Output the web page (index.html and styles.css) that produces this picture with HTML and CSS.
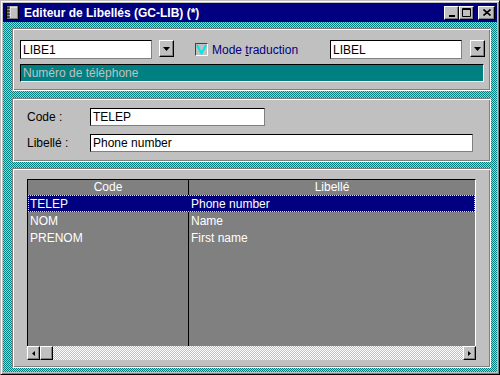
FILE: index.html
```html
<!DOCTYPE html>
<html lang="fr">
<head>
  <meta charset="UTF-8">
  <title>Editeur de Libellés (GC-LIB) (*)</title>
  <link rel="stylesheet" href="styles.css">
</head>
<body>

  <div class="window">
    <div class="titlebar">
      <svg class="app-icon" width="13" height="15" viewBox="0 0 13 15">
        <rect x="0.5" y="0.5" width="12" height="14" fill="#808080" stroke="#000"/>
        <rect x="4" y="2" width="7" height="11" fill="#c0c0c0"/>
        <path d="M4 2h7M4 2v11" stroke="#fff"/>
        <path d="M1 3h3M1 6h3M1 9h3M1 12h3" stroke="#000"/>
      </svg>
      <span class="title">Editeur de Libellés (GC-LIB) (*)</span>
      <div class="controls">
        <span class="ctl"><svg width="8" height="8" viewBox="0 0 8 8"><rect x="1" y="6" width="6" height="2" fill="#000"/></svg></span>
        <span class="ctl"><svg width="9" height="9" viewBox="0 0 9 9"><path d="M0.5 0.5h8v8h-8z" fill="none" stroke="#000"/><path d="M0 1.5h9" stroke="#000"/></svg></span>
        <span class="ctl ctl-close"><svg width="8" height="7" viewBox="0 0 8 7"><path d="M0.5 0.5l7 6M7.5 0.5l-7 6" stroke="#000" stroke-width="1.6"/></svg></span>
      </div>
    </div>

    <div class="client">
      <div class="panel panel-filter">
        <div class="filter-row">
          <div class="field field-table">LIBE1</div>
          <span class="drop-btn"><svg width="7" height="4" viewBox="0 0 7 4"><path d="M0 0h7L3.5 4z" fill="#000"/></svg></span>
          <label class="check">
            <span class="check-box"><svg width="11" height="11" viewBox="0 0 11 11"><path d="M1 1l4.5 8.5L10 1" fill="none" stroke="#00e8e8" stroke-width="2"/></svg></span>
            <span class="check-label">Mode <u>t</u>raduction</span>
          </label>
          <div class="field field-column">LIBEL</div>
          <span class="drop-btn drop-last"><svg width="7" height="4" viewBox="0 0 7 4"><path d="M0 0h7L3.5 4z" fill="#000"/></svg></span>
        </div>
        <div class="hint">Numéro de téléphone</div>
      </div>

      <div class="panel panel-edit">
        <div class="edit-row">
          <span class="edit-label">Code :</span>
          <div class="field field-code">TELEP</div>
        </div>
        <div class="edit-row">
          <span class="edit-label">Libellé :</span>
          <div class="field field-libelle">Phone number</div>
        </div>
      </div>

      <div class="panel panel-list">
        <div class="grid">
          <div class="grid-head">
            <div class="col col-code">Code</div>
            <div class="col col-label">Libellé</div>
          </div>
          <div class="grid-body">
            <div class="grid-row selected">
              <div class="col col-code">TELEP</div>
              <div class="col col-label">Phone number</div>
            </div>
            <div class="grid-row">
              <div class="col col-code">NOM</div>
              <div class="col col-label">Name</div>
            </div>
            <div class="grid-row">
              <div class="col col-code">PRENOM</div>
              <div class="col col-label">First name</div>
            </div>
          </div>
          <div class="scrollbar">
            <span class="sb-btn"><svg width="3" height="5" viewBox="0 0 3 5"><path d="M3 0v5L0 2.5z" fill="#000"/></svg></span>
            <span class="sb-btn sb-thumb"></span>
            <span class="sb-track"></span>
            <span class="sb-btn"><svg width="3" height="5" viewBox="0 0 3 5"><path d="M0 0v5l3-2.5z" fill="#000"/></svg></span>
          </div>
        </div>
      </div>
    </div>
  </div>

</body>
</html>
```

FILE: styles.css
```css
* {
  box-sizing: border-box;
}

body {
  margin: 0;
  font-family: "Liberation Sans", Arial, sans-serif;
  font-size: 12px;
  background: #c0c0c0;
}

.window {
  width: 500px;
  height: 375px;
  display: flex;
  flex-direction: column;
  padding: 2px;
  background: #c0c0c0;
  border: 1px solid;
  border-color: #c0c0c0 #000 #000 #c0c0c0;
  box-shadow: inset 1px 1px #fff, inset -1px -1px #808080;
}

/* title bar */
.titlebar {
  height: 19px;
  display: flex;
  align-items: center;
  padding: 0 2px 0 3px;
  background: #000080;
  color: #fff;
}

.app-icon {
  margin-right: 5px;
}

.title {
  flex: 1;
  font-weight: bold;
  white-space: nowrap;
}

.controls {
  display: flex;
}

.ctl {
  width: 15px;
  height: 14px;
  display: flex;
  align-items: center;
  justify-content: center;
  background: #c0c0c0;
  border: 1px solid;
  border-color: #fff #000 #000 #fff;
  box-shadow: inset -1px -1px #808080;
}

.ctl-close {
  width: 17px;
  margin-left: 4px;
}

/* dithered client area */
.client {
  flex: 1;
  display: flex;
  flex-direction: column;
  gap: 6px;
  padding: 6px 6px 4px 9px;
  background: repeating-conic-gradient(#008080 0 25%, #c0c0c0 0 50%) 0 0 / 2px 2px;
}

.panel {
  background: #c0c0c0;
  border: 1px solid;
  border-color: #808080 #fff #fff #808080;
  box-shadow: inset 1px 1px #fff, inset -1px -1px #808080;
}

.field {
  height: 19px;
  display: flex;
  align-items: center;
  padding: 0 2px;
  background: #fff;
  color: #000;
  border: 1px solid;
  border-color: #000 #808080 #808080 #000;
  white-space: nowrap;
}

/* filter panel */
.panel-filter {
  height: 63px;
  margin-bottom: 1px;
  padding: 11px 5px 0 7px;
}

.filter-row {
  display: flex;
  align-items: flex-start;
}

.field-table,
.field-column {
  width: 132px;
}

.field-column {
  margin-left: auto;
}

.drop-btn {
  width: 15px;
  height: 17px;
  margin-left: 7px;
  display: flex;
  align-items: center;
  justify-content: center;
  background: #c0c0c0;
  border: 1px solid;
  border-color: #fff #000 #000 #fff;
  box-shadow: inset -1px -1px #808080;
}

.drop-last {
  margin-left: 8px;
}

.check {
  display: flex;
  align-items: center;
  height: 19px;
  margin-left: 21px;
  color: #000080;
}

.check-box {
  width: 13px;
  height: 13px;
  margin-right: 4px;
  display: flex;
  align-items: center;
  justify-content: center;
  background: #c0c0c0;
  border: 1px solid;
  border-color: #404040 #fff #fff #404040;
}

.check-label u {
  text-decoration: underline;
}

.hint {
  height: 18px;
  margin: 5px 1px 0 0;
  padding: 0 2px;
  display: flex;
  align-items: center;
  background: #008080;
  color: #c0c0c0;
  border: 1px solid;
  border-color: #000 #fff #fff #000;
}

/* edit panel */
.panel-edit {
  height: 64px;
  padding: 9px 0 0 14px;
  display: flex;
  flex-direction: column;
  gap: 8px;
}

.edit-row {
  display: flex;
  align-items: center;
}

.edit-label {
  width: 63px;
  color: #000;
}

.edit-row .field {
  height: 18px;
}

.field-code {
  width: 175px;
}

.field-libelle {
  width: 383px;
}

/* list panel */
.panel-list {
  flex: 1;
  padding: 10px 14px 7px 14px;
  display: flex;
}

.grid {
  flex: 1;
  display: flex;
  flex-direction: column;
  color: #fff;
}

.grid-head {
  height: 16px;
  display: flex;
  background: #808080;
  border-top: 1px solid #000;
  border-left: 1px solid #000;
  border-right: 1px solid #fff;
}

.grid-head .col {
  text-align: center;
  line-height: 15px;
}

.col-code {
  width: 161px;
  border-right: 1px solid #000;
}

.col-label {
  flex: 1;
}

.grid-body {
  flex: 1;
  background: linear-gradient(#000, #000) 160px 0 / 1px 100% no-repeat, #808080;
  border-left: 1px solid #000;
  border-right: 1px solid #fff;
}

.grid-row {
  height: 17px;
  display: flex;
  align-items: center;
  border: 1px solid transparent;
}

.grid-row .col {
  padding-left: 1px;
  border-right: 0;
  white-space: nowrap;
}

.grid-row .col-code {
  width: 161px;
}

.grid-row .col-label {
  padding-left: 1px;
}

.grid-row.selected {
  background: #000080;
  border: 1px dotted #ffff00;
}

/* horizontal scrollbar */
.scrollbar {
  height: 14px;
  display: flex;
}

.sb-btn {
  width: 13px;
  height: 14px;
  display: flex;
  align-items: center;
  justify-content: center;
  background: #c0c0c0;
  border: 1px solid;
  border-color: #fff #000 #000 #fff;
  box-shadow: inset -1px -1px #808080;
}

.sb-track {
  flex: 1;
  background: repeating-conic-gradient(#fff 0 25%, #c0c0c0 0 50%) 0 0 / 2px 2px;
}
```
